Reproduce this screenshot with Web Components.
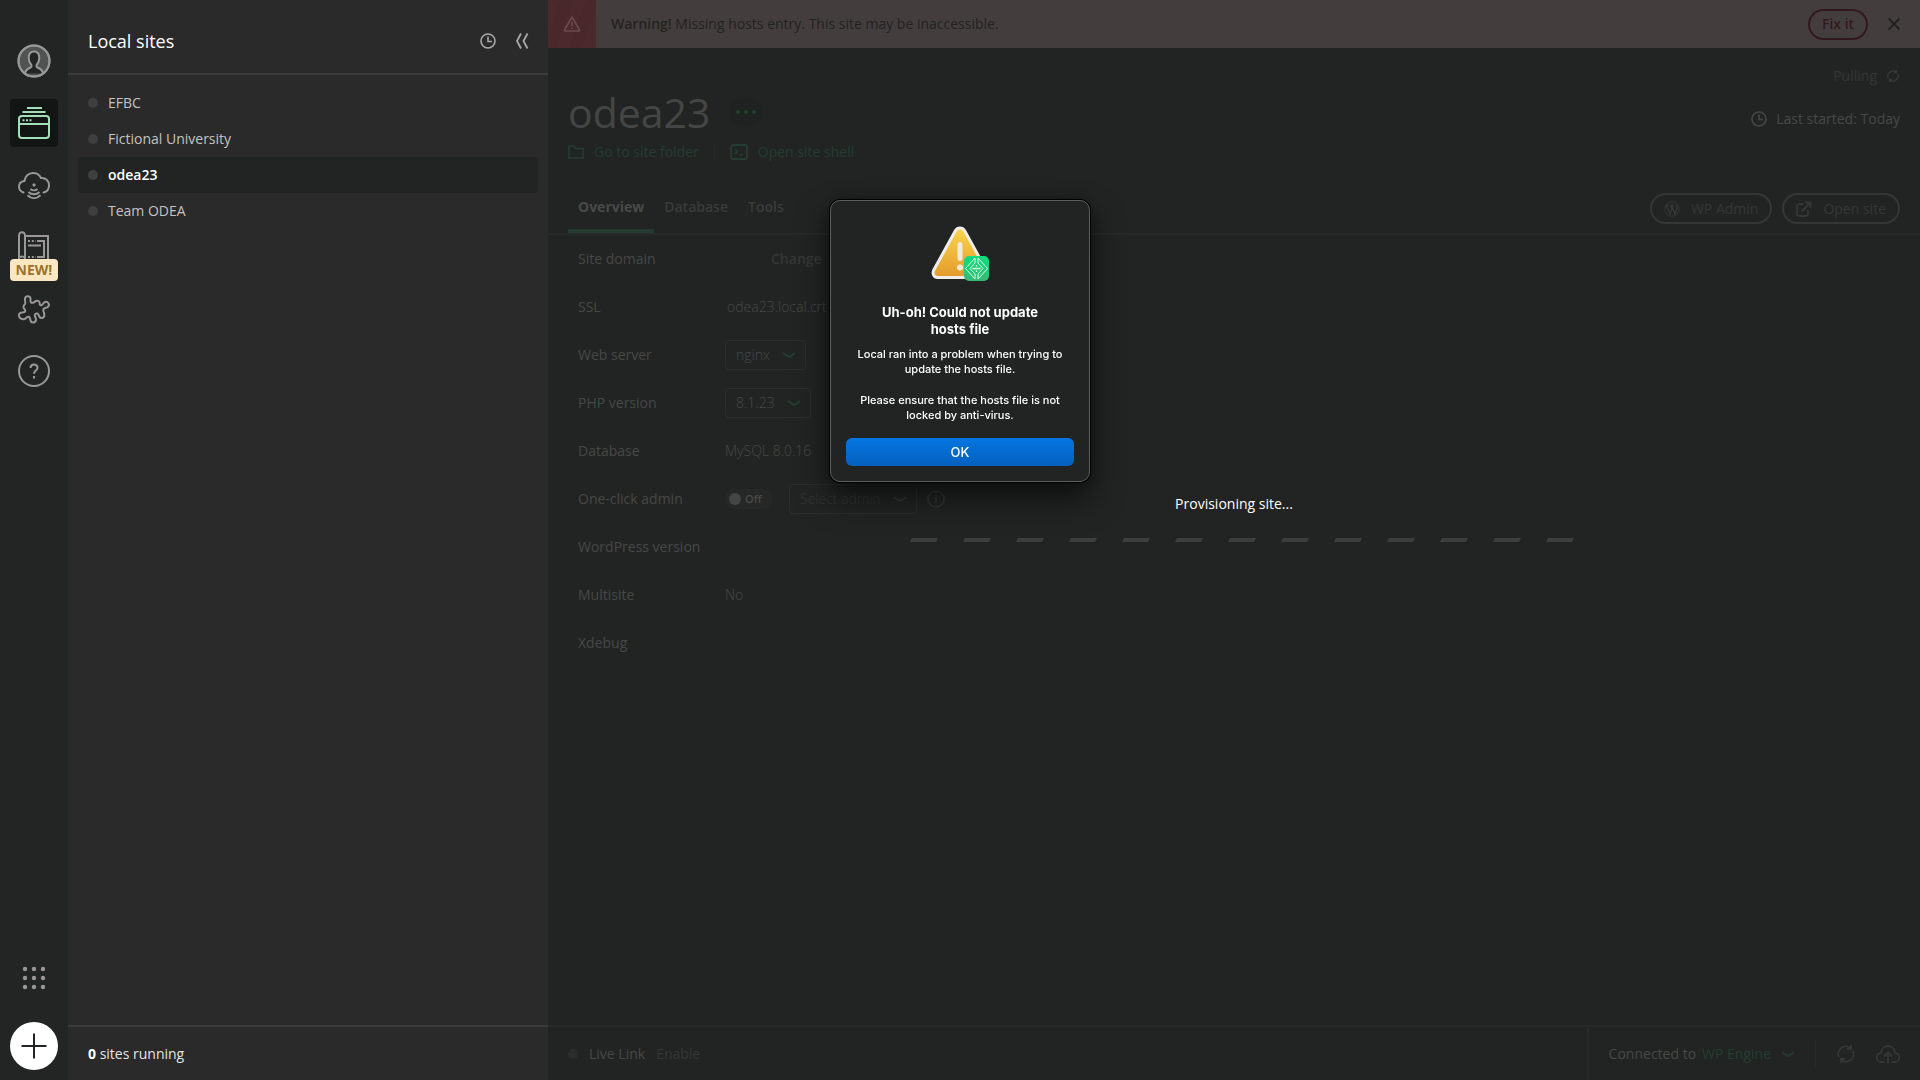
<!DOCTYPE html>
<html lang="en">
<head>
<meta charset="utf-8">
<meta name="viewport" content="width=device-width, initial-scale=1">
<title>Local</title>
<style>
    html, body { height: 100%; margin: 0; }
    body {
        background: #222423;
        font-family: "Open Sans", "Noto Sans", sans-serif;
        font-size: 14px;
        line-height: 20px;
        font-weight: 370;
        overflow: hidden;
        --panel: #2a2a2a;
        --line: #3b3b3b;
        --faint-line: #282a29;
        --dim: #464847;
        --dimmer: #353736;
        --dim-green: #233d32;
    }
</style>
</head>
<body>
<local-app></local-app>

<script>
const svg = (w, h, body, extra = '') =>
    `<svg width="${w}" height="${h}" viewBox="0 0 ${w} ${h}" fill="none" stroke="currentColor" stroke-width="2" aria-hidden="true" ${extra}>${body}</svg>`;

const ICONS = {
    avatar: svg(34, 34, `
        <circle cx="17" cy="17" r="15.5" fill="#505352"/>
        <path fill="#222524" d="M8 29.5c.5-3.700 3-5 5.500-6 1.300-.6 1.300-2 .5-3.200-1.500-1.800-2.300-4-2.300-6.300 0-4 2-6.500 5.300-6.500s5.300 2.500 5.300 6.500c0 2.300-.8 4.500-2.300 6.300-.8 1.200-.8 2.600.5 3.200 2.500 1 5 2.300 5.500 6"/>
        <circle cx="17" cy="17" r="15.5"/>`),
    sites: svg(34, 34, `
        <path d="M10 2h15M5.500 6h23"/>
        <rect x="2" y="10" width="30" height="22" rx="3"/>
        <path d="M2 18h30"/>
        <path stroke-dasharray="2 1.500" d="M5.500 14.200h9"/>`),
    cloud: svg(34, 28, `
        <path stroke-linecap="round" d="M6.500 21.500C3.500 20.500 2 18.500 2 15.800c0-3.300 2.200-5.500 5.400-5.800C8 5.300 11.500 2 16 2c3.800 0 6.600 1.800 8 5 4.500-.5 8 2.700 8 7.300 0 3.700-2 6.500-5.500 7.200"/>
        <path d="M17 12.500v3M15.500 14h3"/>
        <path d="M13.500 18c2 1.800 5 1.800 7 0M11.500 21c3 3 8 3 11 0M10.500 24.200c4 3.800 9 3.800 13 0"/>`),
    blueprint: svg(34, 34, `
        <path d="M2 30V6c0-5 6-5 6 0v24M2 28c1.500-2 4.500-2 6 0M8 6h23v26H8"/>
        <path d="M20 11h7v16h-7M11 15.500h13"/>
        <path stroke-dasharray="2 1.800" d="M11 11h8M11 27h8"/>`),
    addons: svg(34, 30, `
        <path stroke-linejoin="round" d="M8 4.500c.5-3 5-3 5.500 0 .2 1.500-.7 2.600.5 4 1.500 1.300 3.200-.6 5-1.500 2.200-1 4 .7 3.700 2.500-.2 1.500.8 2.300 2.300 1.500 1-.6 1.400-2.500 3-3 3-1 5.200 2.500 3 4.800-1.500 1.500-3.700.9-4.500 2.200-.8 1.500.2 2.700.7 4.500.7 2.800-.8 4.600-2.800 4.500-2 0-2.500-1.700-3-3.500-.6-1.800-3.600-1-3.600 1 0 1.500 1.500 2.500 1.200 4.500-.4 3-4.500 3.300-5.500.6-.6-1.600 0-3.300-1.700-3.800-2-.5-2.300 1.600-4.300 2.200-2.300.6-5-.5-5.500-3-.4-2.500 1.500-3.500 3-3.500 1.500-.1 3.300-.2 3.300-1.800 0-1.400-1.500-1.800-1.800-3.500-.3-2 1.500-2.500 1.800-4C8.500 7.500 7.700 6.500 8 4.500z"/>`),
    help: svg(34, 34, `
        <circle cx="17" cy="17" r="15"/>
        <path d="M13.500 14c0-4.500 7-4.500 7-.3 0 2.800-3.500 2.800-3.500 6M17 22v2.500"/>`),
    grid: svg(24, 24, [3, 12, 21].map(y => [3, 12, 21].map(x => `<circle cx="${x}" cy="${y}" r="2.200" fill="currentColor" stroke="none"/>`).join('')).join('')),
    plus: svg(26, 26, '<path d="M13 0.500v25M.5 13h25"/>'),
    clock: svg(16, 16, '<circle cx="8" cy="8" r="7" stroke-width="1.600"/><path stroke-width="1.600" d="M8 3.500V8.500h4"/>'),
    collapse: svg(16, 18, '<path stroke-width="1.800" d="M7 1.500 3 9l4 7.500M13.500 1.500l-4 7.500 4 7.500"/>'),
    warning: svg(18, 18, '<path stroke-width="1.600" stroke-linejoin="round" d="M9 2 1.500 15c-.3.600 0 1 .6 1h13.800c.6 0 .9-.4.6-1zM9 7v4M9 12.500v1.500"/>'),
    close: svg(14, 14, '<path d="m1.500 1.500 11 11M12.500 1.500l-11 11"/>'),
    sync: svg(14, 14, '<path stroke-width="1.500" d="M2 9a5.500 5.500 0 0 1 8.500-6M12 5a5.500 5.500 0 0 1-8.500 6M10.500 1v2.500H8M3.500 13v-2.500H6"/>'),
    folder: svg(16, 14, '<path d="M1 1h5l1.500 2.500H15V13H1z" stroke-width="1.600"/>'),
    shell: svg(18, 16, '<rect x="1" y="1" width="16" height="14" rx="2" stroke-width="1.800"/><path stroke-width="1.600" d="m5 5 2.500 2.500L5 10M9.500 11H13"/>'),
    dots: svg(24, 6, '<g fill="currentColor" stroke="none"><circle cx="4" cy="3" r="2"/><circle cx="12" cy="3" r="2"/><circle cx="20" cy="3" r="2"/></g>'),
    wordpress: svg(16, 16, '<circle cx="8" cy="8" r="7.200" stroke-width="1"/><path stroke-width="1.500" d="M2.500 4.500 6 13l2-5.500L6.500 4.500M7.500 4.500 11 13l2-6c.3-1.500-.8-2-.8-3M1.500 4.500h3M6 4.500h4"/>'),
    external: svg(16, 16, '<path stroke-width="1.800" d="M7 3H3.500C2 3 1 4 1 5.500v7C1 14 2 15 3.500 15h6c1.500 0 2.500-1 2.500-2.500V9M9 1.500h5.500V7M14.500 1.500 5.500 10.500"/>'),
    chevron: svg(14, 8, '<path stroke-width="1.800" d="m1 2 5 3.600q1 .7 2 0L13 2"/>'),
    info: svg(18, 18, '<circle cx="9" cy="9" r="8" stroke-width="1.500"/><path stroke-width="1.500" d="M9 4.500V6M7.500 8H9v5"/>'),
    refresh: svg(20, 20, '<path stroke-width="1.800" d="M3 13A7.500 7.500 0 0 1 14.500 4M17 7A7.500 7.500 0 0 1 5.500 16M15 1v4h-4M5 19v-4h4"/>'),
    upload: svg(24, 20, '<path stroke-width="1.800" d="M8 18H5.500a4.500 4.500 0 0 1-.5-9C5.500 4.500 8.500 2 12 2s6.500 2.500 7 7a4.500 4.500 0 0 1-.5 9H16M12 19V9M8 12.500 12 8.500l4 4"/>'),
};

// Shared base: renders template() into an open shadow root
class LocalElement extends HTMLElement {
    connectedCallback() {
        if (this.shadowRoot) return;
        this.attachShadow({ mode: 'open' });
        this.shadowRoot.innerHTML = `
            <style>
                * { box-sizing: border-box; }
                button { font: inherit; color: inherit; background: none; border: 0; padding: 0; margin: 0; cursor: pointer; }
                a { color: inherit; text-decoration: none; }
                svg { display: block; flex: none; }
                ${this.styles()}
            </style>
            ${this.template()}
        `;
    }
    styles() { return ''; }
    template() { return ''; }
}

class LocalApp extends LocalElement {
    styles() {
        return `
            :host { display: grid; grid-template-columns: 68px 480px minmax(0, 1fr); height: 100vh; }
        `;
    }
    template() {
        return `
            <side-rail></side-rail>
            <sites-panel>
                <site-item>EFBC</site-item>
                <site-item>Fictional University</site-item>
                <site-item selected>odea23</site-item>
                <site-item>Team ODEA</site-item>
            </sites-panel>
            <site-view></site-view>
            <native-alert>
                <span slot="title">Uh-oh! Could not update hosts file</span>
                <p>Local ran into a problem when trying to update the hosts file.</p>
                <p>Please ensure that the hosts file is not locked by anti-virus.</p>
            </native-alert>
        `;
    }
}

class SideRail extends LocalElement {
    styles() {
        return `
            :host { display: flex; flex-direction: column; align-items: center; padding: 37px 0 10px; background: #222524; color: #999797; }
            nav { display: flex; flex-direction: column; gap: 14px; }
            button { position: relative; display: flex; align-items: center; justify-content: center; width: 48px; height: 48px; border-radius: 4px; }
            .active { background: #131414; color: #a0dfb8; }
            .badge {
                position: absolute; left: 0; right: 0; top: 36px;
                background: #fbe8c3; color: #9c742b; border-radius: 4px;
                font-size: 14px; font-weight: 700; line-height: 22px;
            }
            .apps { margin-top: auto; }
            .add { margin-top: 20px; border-radius: 50%; background: #fff; color: #222524; }
        `;
    }
    template() {
        return `
            <nav aria-label="Primary">
                <button aria-label="Account">${ICONS.avatar}</button>
                <button class="active" aria-label="Local sites">${ICONS.sites}</button>
                <button aria-label="Connect">${ICONS.cloud}</button>
                <button aria-label="Blueprints">${ICONS.blueprint}<span class="badge">NEW!</span></button>
                <button aria-label="Add-ons">${ICONS.addons}</button>
                <button aria-label="Help">${ICONS.help}</button>
            </nav>
            <button class="apps" aria-label="Apps">${ICONS.grid}</button>
            <button class="add" aria-label="Add site">${ICONS.plus}</button>
        `;
    }
}

class SitesPanel extends LocalElement {
    styles() {
        return `
            :host { display: flex; flex-direction: column; background: var(--panel); color: #fff; }
            header { display: flex; align-items: center; gap: 18px; height: 75px; padding: 9px 18px 0 20px; border-bottom: 2px solid var(--line); }
            h1 { margin: 0 auto 0 0; font-size: 18px; line-height: 24px; font-weight: 400; }
            header button { color: #aaa8a8; }
            .list { flex: 1; padding: 10px; }
            footer { display: flex; align-items: center; height: 55px; padding: 0 20px; border-top: 2px solid var(--line); color: #e4e4e4; }
            p { margin: 0; }
            b { color: #fff; }
        `;
    }
    template() {
        return `
            <header>
                <h1>Local sites</h1>
                <button aria-label="Recent">${ICONS.clock}</button>
                <button aria-label="Collapse">${ICONS.collapse}</button>
            </header>
            <div class="list"><slot></slot></div>
            <footer><p><b>0</b> sites running</p></footer>
        `;
    }
}

class SiteItem extends LocalElement {
    styles() {
        return `
            :host { display: block; color: #c4c3c3; border-radius: 4px; }
            :host([selected]) { background: #222423; color: #fff; font-weight: 600; }
            a { display: flex; align-items: center; gap: 10px; height: 36px; padding: 0 10px; }
            i { width: 10px; height: 10px; border-radius: 50%; background: #3f3f3f; }
        `;
    }
    template() {
        return `<a href="#site"><i></i><slot></slot></a>`;
    }
}

class SiteView extends LocalElement {
    styles() {
        return `
            :host { position: relative; display: flex; flex-direction: column; min-width: 0; background: #222423; color: var(--dim); }
            .rows { flex: 1; padding: 0 30px; }
            .change { padding-left: 46px; font-weight: 600; color: var(--dimmer); }
            .cert { padding-left: 2px; }
            .admin { display: flex; align-items: center; gap: 16px; }
            .info { margin-left: -6px; color: var(--dimmer); }
        `;
    }
    template() {
        return `
            <host-warning></host-warning>
            <site-header></site-header>
            <site-tabs></site-tabs>
            <div class="rows">
                <info-row label="Site domain"><button class="change">Change</button></info-row>
                <info-row label="SSL"><span class="cert">odea23.local.crt</span></info-row>
                <info-row label="Web server"><drop-down label="Web server" value="nginx"></drop-down></info-row>
                <info-row label="PHP version"><drop-down label="PHP version" value="8.1.23"></drop-down></info-row>
                <info-row label="Database">MySQL 8.0.16</info-row>
                <info-row label="One-click admin">
                    <div class="admin">
                        <toggle-switch></toggle-switch>
                        <drop-down label="Admin user" value="Select admin" muted></drop-down>
                        <button class="info" aria-label="More information">${ICONS.info}</button>
                    </div>
                </info-row>
                <info-row label="WordPress version"></info-row>
                <info-row label="Multisite">No</info-row>
                <info-row label="Xdebug"></info-row>
            </div>
            <status-bar></status-bar>
            <provision-overlay>Provisioning site...</provision-overlay>
        `;
    }
}

class HostWarning extends LocalElement {
    styles() {
        return `
            :host { display: flex; align-items: center; height: 48px; padding-right: 19px; background: #433e3d; color: #232221; }
            .mark {
                display: flex; align-items: center; justify-content: center; width: 48px; height: 48px; color: #6a4a4c;
                background: repeating-linear-gradient(110deg, #4b292d 0 12px, #49282c 12px 24px);
            }
            p { flex: 1; margin: 0; padding-left: 15px; }
            b { font-weight: 600; }
            .fix { height: 31px; width: 60px; margin-right: 19px; border: 2px solid #33191d; border-radius: 16px; color: #33191d; font-weight: 600; }
        `;
    }
    template() {
        return `
            <span class="mark">${ICONS.warning}</span>
            <p><b>Warning!</b> Missing hosts entry. This site may be inaccessible.</p>
            <button class="fix">Fix it</button>
            <button aria-label="Dismiss">${ICONS.close}</button>
        `;
    }
}

class SiteHeader extends LocalElement {
    styles() {
        return `
            :host { display: flex; justify-content: space-between; height: 134px; padding: 18px 20px 0; }
            .name { display: flex; align-items: center; gap: 19px; padding-top: 19px; }
            h2 { margin: 0; font-size: 41px; line-height: 54px; font-weight: 400; color: #444645; }
            .more { display: flex; align-items: center; justify-content: center; width: 34px; height: 26px; border-radius: 13px; background: #202221; color: #24402f; }
            .links { display: flex; align-items: center; gap: 15px; padding-top: 3px; color: var(--dim-green); font-weight: 500; }
            .links a { display: flex; align-items: center; gap: 10px; }
            .links i { width: 1px; height: 20px; background: var(--faint-line); }
            .status { display: flex; flex-direction: column; align-items: flex-end; gap: 23px; }
            .status div { display: flex; align-items: center; gap: 9px; }
            strong { font-weight: 500; }
            .pulling { color: var(--dimmer); font-weight: 500; }
        `;
    }
    template() {
        return `
            <div>
                <div class="name">
                    <h2>odea23</h2>
                    <button class="more" aria-label="More actions">${ICONS.dots}</button>
                </div>
                <div class="links">
                    <a href="#folder">${ICONS.folder}Go to site folder</a>
                    <i></i>
                    <a href="#shell">${ICONS.shell}Open site shell</a>
                </div>
            </div>
            <div class="status">
                <div class="pulling">Pulling ${ICONS.sync}</div>
                <div>${ICONS.clock}<span><strong>Last started:</strong> Today</span></div>
            </div>
        `;
    }
}

class SiteTabs extends LocalElement {
    styles() {
        return `
            :host { display: flex; justify-content: space-between; height: 53px; padding: 0 20px; border-bottom: 2px solid var(--faint-line); }
            nav { display: flex; }
            nav a { display: flex; align-items: center; padding: 2px 10px 0; font-weight: 600; color: #393b3a; border-bottom: 4px solid transparent; }
            nav a[aria-current] { color: #484a49; font-weight: 700; border-color: #243b31; }
            .actions { display: flex; gap: 10px; padding-top: 11px; }
            .actions button { display: flex; align-items: center; gap: 11px; height: 31px; padding: 0 12px; border: 2px solid var(--dimmer); border-radius: 16px; color: var(--dimmer); font-weight: 500; }
        `;
    }
    template() {
        return `
            <nav aria-label="Site">
                <a href="#overview" aria-current="page">Overview</a>
                <a href="#database">Database</a>
                <a href="#tools">Tools</a>
            </nav>
            <div class="actions">
                <button>${ICONS.wordpress}WP Admin</button>
                <button>${ICONS.external}Open site</button>
            </div>
        `;
    }
}

class InfoRow extends LocalElement {
    styles() {
        return `
            :host { display: grid; grid-template-columns: 147px 1fr; align-items: center; height: 48px; }
            .value { font-weight: 300; }
        `;
    }
    template() {
        return `<span>${this.getAttribute('label')}</span><div class="value"><slot></slot></div>`;
    }
}

class DropDown extends LocalElement {
    styles() {
        return `
            :host { display: inline-grid; align-items: center; height: 30px; color: inherit; vertical-align: middle; }
            :host([muted]) { color: var(--dimmer); }
            select {
                grid-area: 1 / 1; height: 30px; padding: 0 35px 0 10px; appearance: none;
                font: inherit; color: inherit; background: none; border: 1px solid #2c2e2d; border-radius: 4px;
            }
            svg { grid-area: 1 / 1; justify-self: end; margin-right: 10px; color: #21402f; pointer-events: none; }
            :host([muted]) svg { color: var(--dimmer); }
        `;
    }
    template() {
        return `
            <select aria-label="${this.getAttribute('label')}"><option>${this.getAttribute('value')}</option></select>
            ${ICONS.chevron}
        `;
    }
}

class ToggleSwitch extends LocalElement {
    styles() {
        return `
            :host { display: block; }
            label { display: flex; align-items: center; gap: 4px; width: 48px; height: 20px; padding: 0 4px; border-radius: 10px; background: #262827; font-size: 11px; font-weight: 600; color: #484a49; }
            input { appearance: none; width: 12px; height: 12px; margin: 0; border-radius: 50%; background: #444645; }
        `;
    }
    template() {
        return `<label><input type="checkbox" role="switch">Off</label>`;
    }
}

class ProvisionOverlay extends LocalElement {
    styles() {
        return `
            :host { position: absolute; inset: 0; display: flex; flex-direction: column; align-items: center; justify-content: center; gap: 24px; padding-bottom: 44px; color: #fff; }
            .bars { display: flex; gap: 25px; padding-left: 16px; }
            .bars i { width: 28px; height: 4px; background: #3c3d3d; clip-path: polygon(2px 0, 100% 0, 26px 100%, 0 100%); }
        `;
    }
    template() {
        return `
            <slot></slot>
            <div class="bars" role="progressbar" aria-label="Provisioning">${'<i></i>'.repeat(13)}</div>
        `;
    }
}

class StatusBar extends LocalElement {
    styles() {
        return `
            :host { display: flex; justify-content: space-between; height: 55px; border-top: 2px solid var(--faint-line); }
            div { display: flex; align-items: center; }
            .live { gap: 11px; padding-left: 20px; }
            .live i { width: 10px; height: 10px; border-radius: 50%; background: #2b2d2c; }
            .live button { color: var(--dimmer); font-weight: 500; }
            .account { gap: 20px; padding: 0 20px; border-left: 2px solid var(--faint-line); }
            .account a { display: flex; align-items: center; gap: 10px; color: var(--dim-green); font-weight: 500; }
            .account p { display: flex; gap: 6px; margin: 0; }
            .account i { width: 1px; height: 28px; background: var(--faint-line); }
            .account button { color: var(--dimmer); }
        `;
    }
    template() {
        return `
            <div class="live"><i></i><span>Live Link</span><button>Enable</button></div>
            <div class="account">
                <p>Connected to <a href="#account">WP Engine ${ICONS.chevron}</a></p>
                <i></i>
                <button aria-label="Refresh">${ICONS.refresh}</button>
                <button aria-label="Backups">${ICONS.upload}</button>
            </div>
        `;
    }
}

class NativeAlert extends LocalElement {
    styles() {
        return `
            :host {
                position: fixed; top: 200px; left: 50%; width: 260px; margin-left: -130px; padding: 25px 15px 15px; box-sizing: border-box;
                display: flex; flex-direction: column; align-items: center; text-align: center;
                border: 1px solid #5d5f5e; border-radius: 10px; background: #222423; color: #fff;
                box-shadow: 0 0 0 1px #000, 0 16px 32px rgba(0, 0, 0, .6), 0 0 16px rgba(0, 0, 0, .35);
                font-family: Inter, sans-serif; font-size: 11px; line-height: 15px; font-weight: 500;
            }
            h3 { margin: 20px 20px 9px; font-size: 13px; line-height: 17px; font-weight: 700; }
            .text { display: flex; flex-direction: column; gap: 16px; padding: 0 8px; }
            ::slotted(p) { margin: 0; }
            button { align-self: stretch; height: 28px; margin-top: 15px; border-radius: 6px; background: linear-gradient(#0576e2, #0560bd); font-size: 13px; }
        `;
    }
    template() {
        return `
            <svg width="60" height="58" viewBox="0 0 60 58" aria-hidden="true">
                <defs>
                    <linearGradient id="amber" x2="0" y2="1"><stop stop-color="#fbd54b"/><stop offset="1" stop-color="#e39a2c"/></linearGradient>
                    <linearGradient id="mint" x2="0" y2="1"><stop stop-color="#0bdf7c"/><stop offset="1" stop-color="#37ba74"/></linearGradient>
                </defs>
                <path fill="url(#amber)" stroke="#f0eeea" stroke-width="3" stroke-linejoin="round" d="M25.500 4.500c2-3.500 7-3.500 9 0l22 40c1.500 3.500-.5 7-4 7h-45c-3.500 0-5.500-3.500-4-7z"/>
                <rect x="27.500" y="16" width="5" height="19" rx="2.500" fill="#efeae0"/>
                <circle cx="30" cy="41.500" r="3" fill="#efeae0"/>
                <rect x="34" y="30" width="25" height="25" rx="5" fill="url(#mint)"/>
                <g fill="none" stroke="#d9ffe9" stroke-width="1" transform="translate(0 1)">
                    <path d="M45 31v5l-5 5.500 5 5.500v5L35.500 41.500zM48 31v5l5 5.500-5 5.500v5l9.500-10.500z"/>
                    <path stroke-width="1.300" d="M42.500 41.500h8M46.500 38v1.500M46.500 43.500V45"/>
                </g>
            </svg>
            <h3><slot name="title"></slot></h3>
            <div class="text"><slot></slot></div>
            <button>OK</button>
        `;
    }
}

customElements.define('side-rail', SideRail);
customElements.define('sites-panel', SitesPanel);
customElements.define('site-item', SiteItem);
customElements.define('host-warning', HostWarning);
customElements.define('site-header', SiteHeader);
customElements.define('site-tabs', SiteTabs);
customElements.define('info-row', InfoRow);
customElements.define('drop-down', DropDown);
customElements.define('toggle-switch', ToggleSwitch);
customElements.define('provision-overlay', ProvisionOverlay);
customElements.define('status-bar', StatusBar);
customElements.define('site-view', SiteView);
customElements.define('native-alert', NativeAlert);
customElements.define('local-app', LocalApp);
</script>
</body>
</html>
